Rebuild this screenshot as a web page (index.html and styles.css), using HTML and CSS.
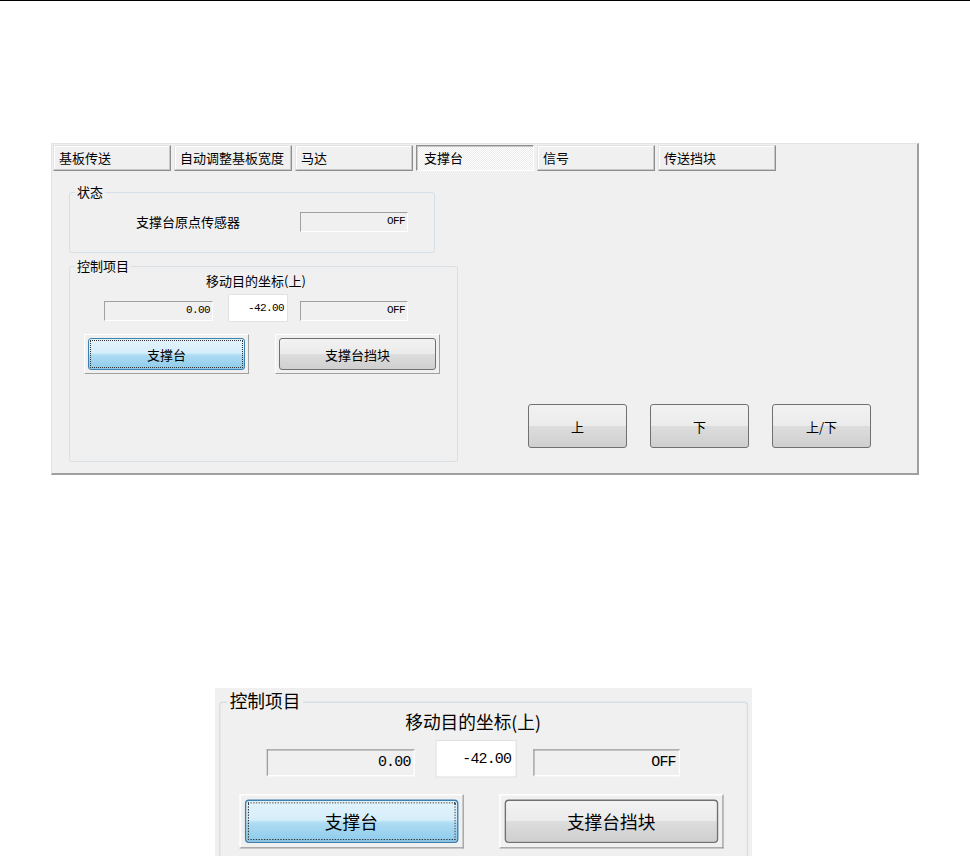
FILE: index.html
```html
<!DOCTYPE html>
<html lang="zh">
<head>
<meta charset="utf-8">
<title>支撑台</title>
<link rel="stylesheet" href="styles.css">
</head>
<body>
<div class="topline"></div>
<div class="panel">
  <div class="tabs">
    <div class="tab">基板传送</div>
    <div class="tab">自动调整基板宽度</div>
    <div class="tab">马达</div>
    <div class="tab active">支撑台</div>
    <div class="tab">信号</div>
    <div class="tab">传送挡块</div>
  </div>
  <div class="body">
    <div class="groups">
      <fieldset class="group status">
        <legend>状态</legend>
        <div class="sensor">
          <div class="sensor-label">支撑台原点传感器</div>
          <div class="field f3">OFF</div>
        </div>
      </fieldset>
      <fieldset class="group ctrl">
        <legend>控制项目</legend>
        <div class="title">移动目的坐标(上)</div>
        <div class="fields">
          <div class="field f1">0.00</div>
          <div class="field f2">-42.00</div>
          <div class="field f3">OFF</div>
        </div>
        <div class="btnrow">
          <div class="frame"><div class="aero blue">支撑台</div></div>
          <div class="frame"><div class="aero">支撑台挡块</div></div>
        </div>
      </fieldset>
    </div>
    <div class="actions">
      <div class="aero small">上</div>
      <div class="aero small">下</div>
      <div class="aero small">上/下</div>
    </div>
  </div>
</div>
<div class="zoomview">
  <div class="zoomcontent">
    <fieldset class="group ctrl">
      <legend>控制项目</legend>
      <div class="title">移动目的坐标(上)</div>
      <div class="fields">
        <div class="field f1">0.00</div>
        <div class="field f2">-42.00</div>
        <div class="field f3">OFF</div>
      </div>
      <div class="btnrow">
        <div class="frame"><div class="aero blue">支撑台</div></div>
        <div class="frame"><div class="aero">支撑台挡块</div></div>
      </div>
    </fieldset>
  </div>
</div>
</body>
</html>
```
FILE: styles.css
```css
* { box-sizing: border-box; }
html, body { margin: 0; padding: 0; background: #fff; overflow: hidden; }
body {
  width: 970px;
  height: 856px;
  font-family: "Noto Sans CJK SC", "Noto Sans", sans-serif;
  font-size: 13px;
  color: #000;
}
.topline { height: 1px; background: #000; }

.panel {
  margin: 142px 0 0 51px;
  width: 868px;
  background: #f0f0f0;
  border-style: solid;
  border-width: 1px 2px 2px 1px;
  border-color: #e3e3e3 #a0a0a0 #a0a0a0 #e3e3e3;
  padding: 1px 0 11px 1px;
}

.tabs { display: flex; gap: 3px; }
.tab {
  width: 118px;
  height: 26px;
  padding-left: 5px;
  line-height: 24px;
  border: 1px solid;
  border-color: #e3e3e3 #8e8e8e #8e8e8e #e3e3e3;
  box-shadow: inset -1px -1px 0 #c8c8c8, inset 1px 1px 0 #fff;
  background: #f0f0f0;
  white-space: nowrap;
}
.tab.active {
  border-color: #8e8e8e #fff #fff #8e8e8e;
  box-shadow: inset 1px 1px 0 #c8c8c8;
  background: repeating-conic-gradient(#fff 0 25%, #ebebeb 0 50%) 0 0 / 2px 2px;
  padding-left: 7px;
}

.body { display: flex; margin-top: 13px; }
.groups { padding-left: 16px; }

.group {
  margin: 0;
  padding: 0;
  border: 1px solid #d5dfe5;
  border-radius: 3px;
  min-width: 0;
}
.group legend {
  padding: 0 2px;
  margin-left: 5px;
  line-height: 16px;
  font-size: 13px;
}
.status { width: 366px; }
.sensor {
  display: flex;
  align-items: center;
  padding: 12px 0 20px 66px;
}
.sensor-label { width: 164px; line-height: 20px; white-space: nowrap; }

.field {
  height: 20px;
  border-style: solid;
  border-width: 1px;
  border-color: #a0a0a0 #fff #fff #a0a0a0;
  background: #f0f0f0;
  font-family: "Liberation Mono", "DejaVu Sans Mono", monospace;
  font-size: 11px;
  letter-spacing: -0.6px;
  text-align: right;
  padding-right: 2px;
  line-height: 16px;
}
.f1 { width: 109px; }
.f3 { width: 108px; }

.ctrl { width: 389px; margin-top: 5px; padding-bottom: 87px; }
.title {
  width: 304px;
  margin-left: 34px;
  text-align: center;
  line-height: 14px;
  white-space: nowrap;
}
.fields { display: flex; align-items: flex-start; margin: 6px 0 0 34px; }
.fields .f1, .fields .f3 { margin-top: 7px; }
.fields .f2 {
  width: 60px;
  height: 28px;
  margin: 0 12px 0 15px;
  background: #fff;
  border: 1px solid #e2e2e2;
  line-height: 26px;
  padding-right: 3px;
}

.btnrow { display: flex; gap: 26px; margin: 12px 0 0 14px; }
.frame {
  width: 165px;
  height: 40px;
  padding: 3px;
  border: 1px solid;
  border-color: #fff #a0a0a0 #a0a0a0 #fff;
}
.aero {
  height: 100%;
  border: 1px solid #707070;
  border-radius: 3px;
  background: linear-gradient(#f2f2f2, #ebebeb 50%, #dddddd 50%, #cfcfcf);
  display: flex;
  align-items: center;
  justify-content: center;
  white-space: nowrap;
}
.aero.blue {
  border-color: #3c7fb1;
  background: linear-gradient(#e3f3fc, #d6eefa 46%, #aedcf3 54%, #8dcaeb);
  outline: 1px dotted #333;
  outline-offset: -3px;
}

.actions {
  display: flex;
  gap: 23px;
  align-self: flex-end;
  margin: 0 0 14px 70px;
}
.aero.small { width: 99px; height: 44px; }

.zoomview {
  margin: 213px 0 0 215px;
  width: 537px;
  height: 168px;
  overflow: hidden;
  background: #f0f0f0;
}
.zoomcontent {
  width: 395px;
  transform: scale(1.36);
  transform-origin: 0 0;
  padding: 2.3px 0 0 2.8px;
}
.zoomcontent .ctrl { margin-top: 0; }
```
